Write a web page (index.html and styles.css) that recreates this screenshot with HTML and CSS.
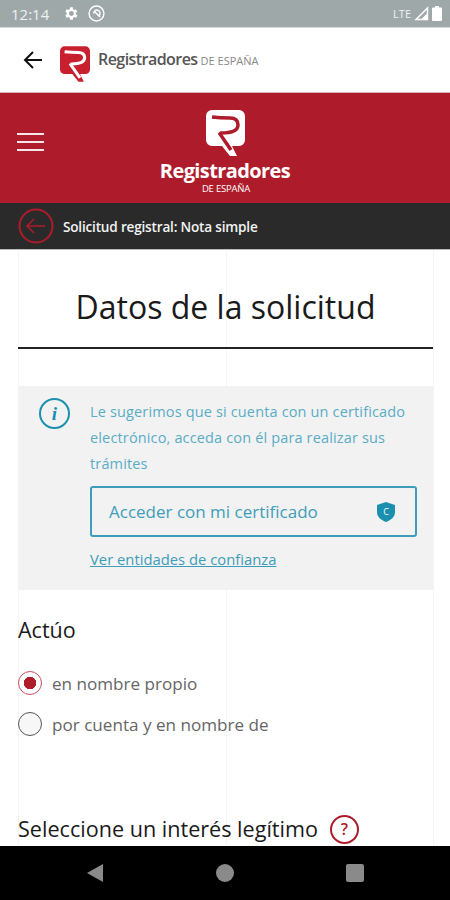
FILE: index.html
```html
<!DOCTYPE html>
<html lang="es">
<head>
    <meta charset="UTF-8">
    <meta name="viewport" content="width=device-width, initial-scale=1.0">
    <title>Registradores</title>
    <link rel="stylesheet" href="styles.css">
</head>
<body>
    <div class="phone">
        <div class="status-bar">
            <span class="clock">12:14</span>
            <svg class="status-icon" width="17" height="17" viewBox="0 0 24 24"><path fill="#fff" d="M19.400 13a7.500 7.500 0 0 0 0-2l2.100-1.600-2-3.500-2.500 1a7.500 7.500 0 0 0-1.700-1L15.300 3.200h-4l-.4 2.700a7.500 7.500 0 0 0-1.700 1l-2.500-1-2 3.500L6.800 11a7.500 7.500 0 0 0 0 2l-2.100 1.600 2 3.500 2.500-1a7.500 7.500 0 0 0 1.700 1l.4 2.700h4l.4-2.700a7.500 7.500 0 0 0 1.700-1l2.500 1 2-3.500zM13.300 15.500a3.500 3.500 0 1 1 0-7 3.500 3.500 0 0 1 0 7z"/></svg>
            <svg class="status-icon" width="17" height="17" viewBox="0 0 24 24" fill="none" stroke="#fff" stroke-width="2"><circle cx="12" cy="12" r="10.500"/><path d="M8 12a4.500 4.500 0 1 1 8 2.500M9 9l8 8"/></svg>
            <span class="status-right">
                <span class="lte">LTE</span>
                <svg width="15" height="15" viewBox="0 0 15 15"><path fill="none" stroke="#fff" stroke-width="1.500" d="M2 13.500 13.500 2v11.500z"/><path fill="#fff" d="M7 13.500 13.500 7v6.500z"/></svg>
                <svg width="10" height="15" viewBox="0 0 10 15"><path fill="#fff" d="M3 0h4v1.500h2a1 1 0 0 1 1 1V14a1 1 0 0 1-1 1H1a1 1 0 0 1-1-1V2.500a1 1 0 0 1 1-1h2z"/></svg>
            </span>
        </div>

        <div class="top-bar">
            <svg class="back-arrow" width="20" height="18" viewBox="0 0 20 18" fill="none" stroke="#111" stroke-width="2"><path d="M19 9H2M10 1 2 9l8 8"/></svg>
            <svg class="top-logo" width="30" height="36" viewBox="0 0 39 46">
                <path fill="#c8202f" d="M6 0h27a6 6 0 0 1 6 6v24a6 6 0 0 1-6 6h-7l5 10h-7l-8-10H6a6 6 0 0 1-6-6V6a6 6 0 0 1 6-6z"/>
                <path fill="none" stroke="#fff" stroke-width="4" d="M6 7c8 1 14 1 18 1 6 0 8 3 8 7 0 5-5 8-17 8l-1 1 12 17"/>
            </svg>
            <span class="top-name">Registradores</span>
            <span class="top-sub">DE ESPAÑA</span>
        </div>

        <div class="red-bar">
            <div class="burger"><i></i><i></i><i></i></div>
            <svg width="39" height="46" viewBox="0 0 39 46">
                <path fill="#fff" d="M6 0h27a6 6 0 0 1 6 6v24a6 6 0 0 1-6 6h-7l5 10h-7l-8-10H6a6 6 0 0 1-6-6V6a6 6 0 0 1 6-6z"/>
                <path fill="none" stroke="#ae1c2c" stroke-width="3.500" d="M6 7c8 1 14 1 18 1 6 0 8 3 8 7 0 5-5 8-17 8l-1 1 11 16"/>
            </svg>
            <div class="red-name">Registradores</div>
            <div class="red-sub">DE ESPAÑA</div>
        </div>

        <div class="section-bar">
            <svg width="36" height="36" viewBox="0 0 36 36" fill="none" stroke="#ae1c2c"><circle cx="18" cy="18" r="16.500" stroke-width="2"/><path stroke-width="1.500" d="M27 18H9M16 11l-7 7 7 7"/></svg>
            <span class="section-title">Solicitud registral: Nota simple</span>
        </div>

        <main class="content">
            <h1 class="page-title">Datos de la solicitud</h1>

            <div class="info-box">
                <div class="info-icon">i</div>
                <div class="info-body">
                    <p class="info-text">Le sugerimos que si cuenta con un certificado electrónico, acceda con él para realizar sus trámites</p>
                    <div class="cert-button">
                        <span>Acceder con mi certificado</span>
                        <svg width="18" height="20" viewBox="0 0 18 20"><path fill="#1b8fae" d="M9 0 18 3v7c0 5-4 8-9 10-5-2-9-5-9-10V3z"/><text x="9" y="13" font-size="9" fill="#fff" text-anchor="middle" font-family="Open Sans, sans-serif">C</text></svg>
                    </div>
                    <a class="trust-link" href="#">Ver entidades de confianza</a>
                </div>
            </div>

            <h2 class="field-title">Actúo</h2>
            <div class="radio-row">
                <span class="radio radio-on"></span>
                <span>en nombre propio</span>
            </div>
            <div class="radio-row">
                <span class="radio"></span>
                <span>por cuenta y en nombre de</span>
            </div>

            <div class="interest">
                <h2 class="field-title interest-title">Seleccione un interés legítimo</h2>
                <span class="help">?</span>
            </div>
        </main>

        <div class="nav-bar">
            <svg width="18" height="20" viewBox="0 0 18 20"><path fill="#8a8a8a" d="M17 1v18L1 10z"/></svg>
            <svg width="18" height="18" viewBox="0 0 18 18"><circle cx="9" cy="9" r="9" fill="#8a8a8a"/></svg>
            <svg width="18" height="18" viewBox="0 0 18 18"><rect width="18" height="18" rx="2" fill="#8a8a8a"/></svg>
        </div>
    </div>
</body>
</html>
```
FILE: styles.css
```css
html, body {
    margin: 0;
    padding: 0;
}
body {
    font-family: "Open Sans", sans-serif;
    background-color: white;
}
.phone {
    width: 450px;
    height: 900px;
    display: flex;
    flex-direction: column;
    overflow: hidden;
}
.status-bar {
    height: 27px;
    flex-shrink: 0;
    display: flex;
    align-items: center;
    padding: 0 8px 0 11px;
    background-color: #9fa8a9;
    color: #eef1f1;
    border-bottom: 1px solid #d5d9d9;
}
.clock {
    font-size: 15px;
    margin-right: 13px;
}
.status-icon {
    margin-right: 9px;
}
.status-right {
    margin-left: auto;
    display: flex;
    align-items: center;
    gap: 3px;
}
.lte {
    font-size: 11px;
}
.top-bar {
    height: 64px;
    flex-shrink: 0;
    display: flex;
    align-items: center;
    padding-left: 23px;
    border-bottom: 1px solid #d9b5b9;
}
.back-arrow {
    margin-right: 17px;
}
.top-logo {
    margin: 7px 8px 0 0;
}
.top-name {
    font-size: 16px;
    font-weight: 600;
    letter-spacing: -0.55px;
    color: #555;
    margin-bottom: 3px;
}
.top-sub {
    font-size: 11px;
    color: #888;
    margin-left: 3px;
}
.red-bar {
    position: relative;
    height: 110px;
    flex-shrink: 0;
    background-color: #ae1c2c;
    color: white;
    display: flex;
    flex-direction: column;
    align-items: center;
    padding-top: 17px;
    box-sizing: border-box;
}
.burger {
    position: absolute;
    left: 17px;
    top: 40px;
    display: flex;
    flex-direction: column;
    gap: 6px;
}
.burger i {
    display: block;
    width: 27px;
    height: 2px;
    background-color: #f7e6e8;
}
.red-name {
    font-size: 20px;
    font-weight: 700;
    letter-spacing: -0.6px;
    line-height: 24px;
    margin-top: 3px;
}
.red-sub {
    font-size: 9.500px;
    line-height: 11px;
    letter-spacing: -0.2px;
    margin-left: 2px;
}
.section-bar {
    height: 46px;
    flex-shrink: 0;
    background-color: #2a2a2a;
    display: flex;
    align-items: center;
    padding-left: 18px;
    gap: 9px;
    border-bottom: 1px solid #bbb;
}
.section-title {
    color: #f2f2f2;
    font-size: 13.600px;
    font-weight: 600;
    letter-spacing: -0.2px;
}
.content {
    flex: 1;
    min-height: 0;
    overflow: hidden;
    padding: 0 17px 0 18px;
    background-image: linear-gradient(#f5f5f5, #f5f5f5), linear-gradient(#f5f5f5, #f5f5f5), linear-gradient(#f5f5f5, #f5f5f5);
    background-size: 1px 100%;
    background-repeat: no-repeat;
    background-position: 18px 0, 226px 0, 433px 0;
}
.page-title {
    margin: 0 0 37px;
    height: 99px;
    box-sizing: border-box;
    padding-top: 34px;
    border-bottom: 2px solid #222;
    text-align: center;
    font-size: 32px;
    font-weight: 400;
    line-height: 46px;
    color: #1a1a1a;
}
.info-box {
    display: flex;
    height: 204px;
    box-sizing: border-box;
    background-color: #f2f2f2;
    padding: 12px 16px 0 21px;
}
.info-icon {
    width: 27px;
    height: 27px;
    flex-shrink: 0;
    border: 2px solid #1b8fae;
    border-radius: 50%;
    margin-right: 20px;
    color: #1b8fae;
    font-family: "Liberation Serif", serif;
    font-style: italic;
    font-weight: 700;
    font-size: 19px;
    line-height: 27px;
    text-align: center;
}
.info-body {
    flex: 1;
}
.info-text {
    margin: 1px 0 0;
    font-size: 14.500px;
    letter-spacing: 0.15px;
    line-height: 26px;
    color: #5aacc5;
}
.cert-button {
    display: flex;
    align-items: center;
    justify-content: space-between;
    height: 51px;
    box-sizing: border-box;
    margin-top: 9px;
    padding: 0 20px 0 17px;
    border: 2px solid #3e9db9;
    border-radius: 3px;
    font-size: 17px;
    color: #3e9db9;
}
.trust-link {
    display: block;
    margin-top: 12px;
    font-size: 14.800px;
    color: #3e9db9;
}
.field-title {
    margin: 25px 0 0;
    font-size: 21.500px;
    font-weight: 400;
    line-height: 30px;
    color: #1a1a1a;
}
.radio-row {
    display: flex;
    align-items: center;
    gap: 10px;
    height: 24px;
    margin-top: 17px;
    font-size: 17.100px;
    color: #666;
}
.field-title + .radio-row {
    margin-top: 26px;
}
.radio {
    width: 22px;
    height: 22px;
    flex-shrink: 0;
    border: 1px solid #555;
    border-radius: 50%;
    background-color: #f7f7f7;
}
.radio-on {
    border-color: #c8505c;
    background: radial-gradient(circle, #ae1c2c 0 6px, white 6.500px);
}
.interest {
    display: flex;
    align-items: center;
    gap: 12px;
    margin-top: 78px;
}
.interest-title {
    margin: 0;
    font-size: 21.600px;
}
.help {
    width: 29px;
    height: 29px;
    box-sizing: border-box;
    border: 2px solid #ae1c2c;
    border-radius: 50%;
    color: #ae1c2c;
    font-size: 16px;
    font-weight: 600;
    line-height: 25px;
    text-align: center;
}
.nav-bar {
    height: 54px;
    flex-shrink: 0;
    background-color: black;
    display: flex;
    align-items: center;
    justify-content: space-between;
    padding: 0 86px;
}
```
